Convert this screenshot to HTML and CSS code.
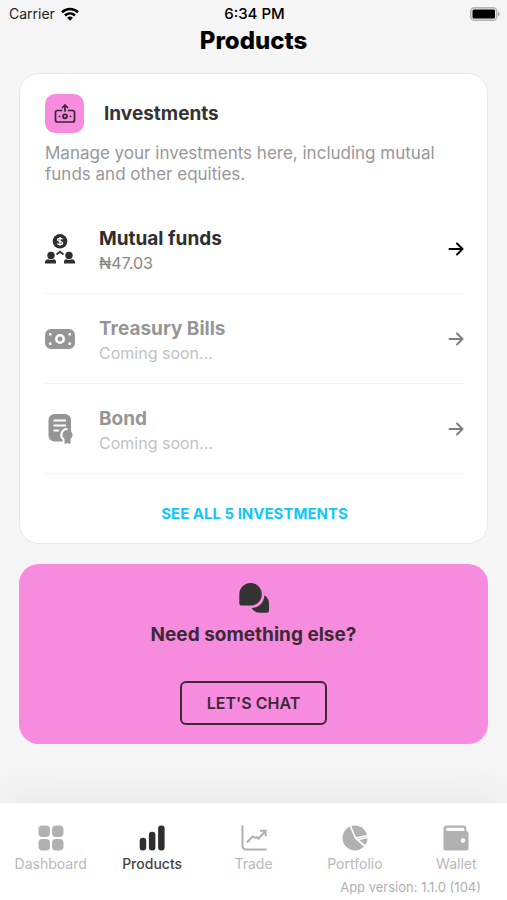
FILE: index.html
```html
<!DOCTYPE html>
<html lang="en">
<head>
  <meta charset="UTF-8" />
  <meta name="viewport" content="width=device-width, initial-scale=1.0"/>
  <title>Products</title>
  <link rel="stylesheet" href="styles.css">
</head>
<body>
  <div class="status-bar">
    <div class="carrier">
      <span>Carrier</span>
      <svg width="18" height="14" viewBox="0 0 18 14" fill="none" stroke="#000" stroke-width="2.6">
        <path d="M1 5.2C5.5.9 12.5.9 17 5.2"/>
        <path d="M4 8.5C6.9 5.8 11.1 5.8 14 8.5"/>
        <path d="M9 13.7 6.1 10.7C7.8 9.2 10.2 9.2 11.9 10.7Z" fill="#000" stroke="none"/>
      </svg>
    </div>
    <span class="time">6:34 PM</span>
    <div class="battery">
      <svg width="30" height="14" viewBox="0 0 30 14">
        <rect x=".7" y=".7" width="26" height="12.6" rx="3.5" fill="#e4e4e4" stroke="#b4b4b4" stroke-width="1.4"/>
        <rect x="2.5" y="2.5" width="22.5" height="9" rx="1.5" fill="#000"/>
        <path d="M28 4.5c2.2.8 2.2 4.200 0 5z" fill="#a8a8a8"/>
      </svg>
    </div>
  </div>

  <header>
    <h1>Products</h1>
  </header>

  <main>
    <section class="card">
      <div class="card-header">
        <div class="card-icon">
          <svg width="22" height="22" viewBox="0 0 22 22" fill="none" stroke="#33252f" stroke-width="1.7" stroke-linecap="round" stroke-linejoin="round">
            <path d="M7.500 7.500H3.500a2 2 0 0 0-2 2v7.500a2 2 0 0 0 2 2h15a2 2 0 0 0 2-2V9.500a2 2 0 0 0-2-2H14.500"/>
            <path d="M11 8V2.500M8.500 4.500 11 2l2.500 2.500"/>
            <circle cx="11" cy="13.300" r="2"/>
            <path d="M5.500 13.300h.1M16.400 13.300h.1"/>
          </svg>
        </div>
        <h2>Investments</h2>
      </div>
      <p class="card-description">Manage your investments here, including mutual funds and other equities.</p>

      <a class="product" href="#mutual-funds">
        <svg class="product-icon" width="30" height="30" viewBox="0 0 30 30" fill="#2e2e2e">
          <circle cx="15" cy="7.300" r="7.300"/>
          <path d="M17.600 5.300C17 4.200 12.600 3.700 12.600 5.900c0 2.100 5 1 5 3.200 0 2.100-4.300 1.900-5.200.3M15 3v8.800" fill="none" stroke="#fff" stroke-width="1.300"/>
          <path d="M11.500 20.500 15 17.700l3.500 2.800" fill="none" stroke="#2e2e2e" stroke-width="1.800"/>
          <circle cx="6" cy="21.500" r="3.700"/>
          <circle cx="24" cy="21.500" r="3.700"/>
          <path d="M0 29.500v-1.500c0-2 2-2.800 3-2.800 1.800 1 4.200 1 6 0 1 0 2 1 2 2.800v1.500zM19 29.500v-1.500c0-2 1-2.800 2-2.800 1.800 1 4.200 1 6 0 1 0 3 .8 3 2.800v1.500z"/>
        </svg>
        <div class="product-text">
          <h3>Mutual funds</h3>
          <p>₦47.03</p>
        </div>
        <svg class="arrow" width="16" height="16" viewBox="0 0 16 16"><path d="M1.500 8h13M9 2.500 14.500 8 9 13.500"/></svg>
      </a>

      <a class="product soon" href="#treasury-bills">
        <svg class="product-icon" width="30" height="30" viewBox="0 0 30 30" fill="#2e2e2e">
          <path fill-rule="evenodd" d="M6 5h18a6 6 0 0 1 6 6v8a6 6 0 0 1-6 6H6a6 6 0 0 1-6-6v-8a6 6 0 0 1 6-6zM15 10a5 5 0 1 0 0 10 5 5 0 0 0 0-10zM15 12.600a2.400 2.400 0 1 1 0 4.800 2.400 2.400 0 0 1 0-4.800zM4 9v2.500h2.500V9zM23.500 9v2.500H26V9zM4 18.500V21h2.500v-2.500zM23.500 18.500V21H26v-2.500z"/>
        </svg>
        <div class="product-text">
          <h3>Treasury Bills</h3>
          <p>Coming soon...</p>
        </div>
        <svg class="arrow" width="16" height="16" viewBox="0 0 16 16"><path d="M1.500 8h13M9 2.500 14.500 8 9 13.500"/></svg>
      </a>

      <a class="product soon" href="#bond">
        <svg class="product-icon" width="30" height="30" viewBox="0 0 30 30">
          <rect x="3.500" y="0" width="22.500" height="27.500" rx="6" fill="#2e2e2e"/>
          <path d="M8.500 6.500h12.500M8.500 11.500h12.500M8.500 16.500h5.500" stroke="#fff" stroke-width="2.200"/>
          <path d="M22.200 14a6.800 6.800 0 0 0-4.500 12V30H27z" fill="#fff"/>
          <path d="M22.500 16a5 5 0 0 0-3 9v5l3-1 3 1v-5a5 5 0 0 0-3-9z" fill="#2e2e2e"/>
        </svg>
        <div class="product-text">
          <h3>Bond</h3>
          <p>Coming soon...</p>
        </div>
        <svg class="arrow" width="16" height="16" viewBox="0 0 16 16"><path d="M1.500 8h13M9 2.500 14.500 8 9 13.500"/></svg>
      </a>

      <a class="see-all" href="#investments">SEE ALL 5 INVESTMENTS</a>
    </section>

    <section class="chat-card">
      <svg width="30" height="30" viewBox="0 0 30 30" fill="#333">
        <path d="M11.500 0a11.300 11.300 0 1 1 0 22.600H3a2.700 2.700 0 0 1-2.700-2.700V11.300A11.300 11.300 0 0 1 11.500 0z"/>
        <path d="M25.300 12.200A9.700 9.700 0 0 1 30 20.500v6.800a2.500 2.500 0 0 1-2.500 2.500h-7a9.500 9.500 0 0 1-8-4.700c7.500-.3 12.800-5.600 12.800-12.900z"/>
      </svg>
      <h2>Need something else?</h2>
      <button class="chat-btn" type="button">LET'S CHAT</button>
    </section>
  </main>

  <footer>
    <nav>
      <a class="tab" href="#dashboard">
        <svg width="26" height="26" viewBox="0 0 26 26" fill="#b1b1b1">
          <rect x=".5" y=".5" width="11.500" height="11.500" rx="4"/>
          <rect x="14" y=".5" width="11.500" height="11.500" rx="4"/>
          <rect x=".5" y="14" width="11.500" height="11.500" rx="4"/>
          <rect x="14" y="14" width="11.500" height="11.500" rx="4"/>
        </svg>
        <span>Dashboard</span>
      </a>
      <a class="tab active" href="#products">
        <svg width="26" height="26" viewBox="0 0 26 26" fill="#2e2e2e">
          <rect x=".7" y="12.700" width="6.500" height="12.800" rx="3"/>
          <rect x="9.900" y="6.700" width="6.500" height="18.800" rx="3"/>
          <rect x="19.100" y=".5" width="6.500" height="25" rx="3"/>
        </svg>
        <span>Products</span>
      </a>
      <a class="tab" href="#trade">
        <svg width="26" height="26" viewBox="0 0 26 26" fill="none" stroke="#b1b1b1" stroke-width="2">
          <path d="M1.500.5v20.500a3.500 3.500 0 0 0 3.500 3.500h20.500"/>
          <path d="M6 17.500l5.500-6 2 1.300 2.500-.6 1.500 1.300L24 6.500M19 5.700h5.700v5.500"/>
        </svg>
        <span>Trade</span>
      </a>
      <a class="tab" href="#portfolio">
        <svg width="26" height="26" viewBox="0 0 26 26">
          <circle cx="13" cy="13" r="12.500" fill="#b1b1b1"/>
          <path d="M7.500-1 13.500 13 24.500 22.500M13.500 13 27 10.300M16 14.500 27 12.300" fill="none" stroke="#fff" stroke-width="1.700"/>
        </svg>
        <span>Portfolio</span>
      </a>
      <a class="tab" href="#wallet">
        <svg width="26" height="26" viewBox="0 0 26 26" fill="#b1b1b1">
          <path fill-rule="evenodd" d="M4 .5h16.500a2.800 2.800 0 0 1 2.800 2.800V6a2.400 2.400 0 0 1 2.200 2.400V23a2.500 2.500 0 0 1-2.500 2.500H3A2.500 2.500 0 0 1 .5 23V4A3.500 3.500 0 0 1 4 .5zM4.500 2.800a1.600 1.600 0 0 0 0 3.200h16.800V4.200a1.400 1.400 0 0 0-1.400-1.400zM20 13.300a2.300 2.300 0 1 0 0 4.600 2.300 2.300 0 0 0 0-4.600z"/>
        </svg>
        <span>Wallet</span>
      </a>
    </nav>
    <p class="version">App version: 1.1.0 (104)</p>
  </footer>
</body>
</html>
```

FILE: styles.css
```css
* {
  margin: 0;
  padding: 0;
  box-sizing: border-box;
  font-family: Inter, 'Noto Sans', sans-serif;
}

body {
  background-color: #f5f5f5;
  min-height: 100vh;
  display: flex;
  flex-direction: column;
}

a {
  text-decoration: none;
  color: inherit;
}

svg {
  display: block;
  flex-shrink: 0;
}

.status-bar {
  display: grid;
  grid-template-columns: 1fr auto 1fr;
  align-items: center;
  height: 27px;
  padding: 0 7px 0 9px;
  font-size: 14px;
  color: #000;
}

.carrier {
  display: flex;
  align-items: center;
  gap: 6px;
  color: #222;
}

.time {
  font-size: 15px;
  font-weight: 500;
}

.battery {
  justify-self: end;
}

header {
  text-align: center;
}

h1 {
  font-size: 24px;
  line-height: 28px;
  font-weight: 800;
  color: #000;
}

main {
  display: flex;
  flex-direction: column;
  gap: 20px;
  padding: 18px 19px 58px;
}

.card {
  background-color: #fff;
  border: 1px solid #e8e8e8;
  border-radius: 20px;
  padding: 20px 23px 16px 25px;
}

.card-header {
  display: flex;
  align-items: center;
  gap: 20px;
}

.card-icon {
  width: 39px;
  height: 39px;
  border-radius: 10px;
  background-color: #f78bdd;
  display: flex;
  align-items: center;
  justify-content: center;
}

h2 {
  font-size: 19px;
  line-height: 24px;
  font-weight: 700;
  color: #333;
}

.card-description {
  margin: 10px 0 19px;
  font-size: 17px;
  line-height: 21px;
  color: #979797;
}

.product {
  display: flex;
  align-items: center;
  gap: 24px;
  padding: 19px 0 18px;
  border-bottom: 1px solid #f2f2f2;
}

.product-text {
  flex-grow: 1;
  padding-top: 4px;
}

h3 {
  font-size: 19px;
  line-height: 24px;
  font-weight: 700;
  color: #2e2e2e;
}

.product-text p {
  font-size: 16px;
  line-height: 24px;
  color: #858585;
}

.arrow {
  fill: none;
  stroke: #000;
  stroke-width: 2;
  stroke-linecap: round;
  stroke-linejoin: round;
}

.soon .product-icon,
.soon .product-text,
.soon .arrow {
  opacity: 0.5;
}

.see-all {
  display: block;
  margin-top: 27px;
  text-align: center;
  font-size: 15px;
  line-height: 26px;
  font-weight: 700;
  color: #10c8f5;
}

.chat-card {
  display: flex;
  flex-direction: column;
  align-items: center;
  padding: 19px 24px;
  border-radius: 20px;
  background-color: #f78bdd;
}

.chat-card h2 {
  margin: 10px 0 34px;
  color: #3b2a36;
}

.chat-btn {
  height: 44px;
  padding: 0 25px;
  border: 2px solid #3b2a36;
  border-radius: 6px;
  background: none;
  font-size: 16px;
  font-weight: 600;
  color: #3b2a36;
  cursor: pointer;
}

footer {
  margin-top: auto;
  padding: 22px 0 5px;
  background-color: #fff;
  box-shadow: 0 -12px 40px -8px rgba(0, 0, 0, 0.07);
}

nav {
  display: flex;
}

.tab {
  flex: 1;
  display: flex;
  flex-direction: column;
  align-items: center;
  gap: 4px;
  font-size: 14px;
  line-height: 18px;
  color: #b8b8b8;
}

.tab.active {
  font-weight: 500;
  color: #444;
}

.version {
  margin-top: 6px;
  padding-right: 26px;
  text-align: right;
  font-size: 13px;
  line-height: 16px;
  color: #b0b0b0;
}
```
